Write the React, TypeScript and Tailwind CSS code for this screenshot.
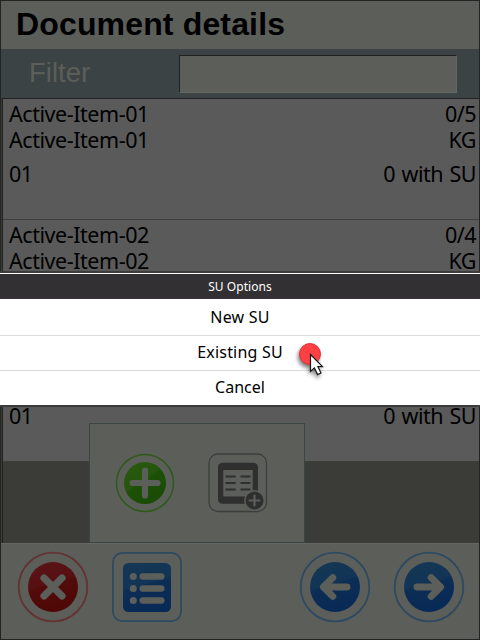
import React from "react";

const uiFont = "font-['Noto_Sans',sans-serif]";
const arial = "font-['Liberation_Sans',Arial,sans-serif]";

const items = [
  { name: "Active-Item-01", qty: "0/5", unit: "KG", code: "01", su: "0 with SU" },
  { name: "Active-Item-02", qty: "0/4", unit: "KG", code: "01", su: "0 with SU" },
  { name: "Active-Item-03", qty: "0/4", unit: "KG", code: "01", su: "0 with SU" },
];

function Line({ left, right }: { left: string; right: string }) {
  return (
    <div className="flex h-[26px] justify-between">
      <span className="tracking-[-0.45px]">{left}</span>
      <span className="tracking-[-0.5px] [word-spacing:1.4px]">{right}</span>
    </div>
  );
}

function Defs() {
  return (
    <defs>
      <linearGradient id="blue" x1="0" y1="0" x2="0.3" y2="1">
        <stop offset="0" stopColor="#153854" />
        <stop offset="0.5" stopColor="#123456" />
        <stop offset="0.56" stopColor="#0c2d54" />
        <stop offset="1" stopColor="#082a56" />
      </linearGradient>
      <linearGradient id="red" x1="0" y1="0" x2="0.3" y2="1">
        <stop offset="0" stopColor="#5a1519" />
        <stop offset="0.5" stopColor="#561012" />
        <stop offset="0.56" stopColor="#520b0a" />
        <stop offset="1" stopColor="#4f0806" />
      </linearGradient>
      <linearGradient id="green" x1="0" y1="0" x2="0.7" y2="1">
        <stop offset="0" stopColor="#2a5a12" />
        <stop offset="0.48" stopColor="#24560b" />
        <stop offset="0.55" stopColor="#1d5007" />
        <stop offset="1" stopColor="#174c04" />
      </linearGradient>
    </defs>
  );
}

function CloseIcon() {
  return (
    <svg width="72" height="72" viewBox="0 0 72 72">
      <Defs />
      <circle cx="36" cy="36" r="34.3" fill="none" stroke="#633231" strokeWidth="1.8" />
      <circle cx="36" cy="36" r="25" fill="url(#red)" />
      <path d="M27 27 45 45M45 27 27 45" stroke="#5c5e5a" strokeWidth="7.2" strokeLinecap="round" />
    </svg>
  );
}

function ListIcon() {
  return (
    <svg width="72" height="72" viewBox="0 0 72 72">
      <rect x="1.9" y="1.9" width="68.2" height="68.2" rx="9.5" fill="none" stroke="#2d4a60" strokeWidth="1.8" />
      <rect x="12" y="12" width="48" height="49" rx="5.5" fill="url(#blue)" />
      {[25.5, 37.5, 49.5].map((y) => (
        <g key={y} fill="#5c5e5a">
          <circle cx="22.300" cy={y} r="3.5" />
          <rect x="28.5" y={y - 3.2} width="25" height="6.4" rx="3.2" />
        </g>
      ))}
    </svg>
  );
}

function ArrowIcon({ flip = false }: { flip?: boolean }) {
  return (
    <svg width="72" height="72" viewBox="0 0 72 72">
      <circle cx="36" cy="36" r="34.3" fill="none" stroke="#2d4a60" strokeWidth="1.8" />
      <circle cx="36" cy="36" r="25" fill="url(#blue)" />
      <g transform={flip ? "translate(72 0) scale(-1 1)" : undefined}>
        <path
          d="M33.8 26.6 24.4 36 33.8 45.4M25.5 36H48"
          fill="none"
          stroke="#5c5e5a"
          strokeWidth="6.9"
          strokeLinecap="round"
          strokeLinejoin="round"
        />
      </g>
    </svg>
  );
}

function AddIcon() {
  return (
    <svg width="60" height="60" viewBox="0 0 60 60">
      <circle cx="30" cy="30" r="28.5" fill="none" stroke="#2d5a18" strokeWidth="1.5" />
      <circle cx="30" cy="30" r="21" fill="url(#green)" />
      <path d="M30 17.5V42.5M17.5 30H42.5" stroke="#5c5e5a" strokeWidth="6.2" strokeLinecap="round" />
    </svg>
  );
}

function AddListIcon() {
  return (
    <svg width="60" height="60" viewBox="0 0 60 60">
      <rect x="1" y="1" width="57.5" height="57.5" rx="9" fill="none" stroke="#3d3e3c" strokeWidth="1.3" />
      <rect x="10" y="9.7" width="40" height="41" rx="4.5" fill="#2e2f2e" />
      <rect x="15.3" y="17" width="29.4" height="26.5" fill="#5c5e5a" />
      {[23.5, 30, 36.5].map((y) => (
        <path key={y} d={`M17.5 ${y}H27.7M32.5 ${y}H42.5`} stroke="#2e2f2e" strokeWidth="1.8" />
      ))}
      <circle cx="46.5" cy="47.5" r="10.5" fill="#5c5e5a" />
      <circle cx="46.5" cy="47.5" r="9" fill="#2e2f2e" />
      <path d="M46.5 42.6V52.4M41.6 47.5H51.4" stroke="#5c5e5a" strokeWidth="2.2" strokeLinecap="round" />
    </svg>
  );
}

function Pointer() {
  return (
    <svg width="40" height="44" viewBox="0 0 40 44" className="absolute top-[66px] left-[294px]">
      <defs>
        <filter id="soft" x="-50%" y="-50%" width="200%" height="200%">
          <feGaussianBlur stdDeviation="2" />
        </filter>
      </defs>
      <g filter="url(#soft)" fill="#000" opacity="0.55">
        <circle cx="14.5" cy="18" r="10.5" />
        <path d="M15 18V36L19 32L22.500 39L26 37.500L23 31H28Z" />
      </g>
      <circle cx="16" cy="15" r="10.5" fill="#fc4044" stroke="#dc3539" strokeWidth="1" />
      <path
        d="M16.500 15.500V32.500L20.400 28.900L23.600 35.600L27 34L23.900 27.700H28.500Z"
        fill="#fff"
        stroke="#161616"
        strokeWidth="1.2"
      />
    </svg>
  );
}

function OptionsDialog() {
  return (
    <div className={`absolute top-[271px] left-0 w-[480px] border-y-2 border-[#3c3d3a] ${uiFont}`}>
      <div className="relative h-[132px] bg-white text-center text-black">
        <div className="h-[26px] border-t border-white bg-[#333033] text-[12px] leading-[25px] tracking-[0.05px] text-white">
          SU Options
        </div>
        <div className="h-[37px] border-b border-[#dcdcdc] text-[16px] leading-[36px] tracking-[0.2px]">New SU</div>
        <div className="h-[35px] border-b border-[#dcdcdc] text-[16px] leading-[33px] tracking-[0.2px]">Existing SU</div>
        <div className="h-[34px] text-[16px] leading-[33px]">Cancel</div>
        <Pointer />
      </div>
    </div>
  );
}

export default function App() {
  return (
    <div className="relative h-[640px] w-[480px] overflow-hidden">
      <div className="flex h-full flex-col border border-[#242523] bg-[#5c5e5a] text-black">
        <h1 className={`h-[48px] shrink-0 pl-[15px] text-[32px] leading-[46px] font-bold tracking-[0.15px] ${arial}`}>
          Document details
        </h1>
        <div className="flex h-[49px] shrink-0 items-start bg-[#3b4344]">
          <label className={`w-[178px] pl-[28px] text-[27.5px] leading-[47px] text-[#5c5e5a] ${arial}`}>Filter</label>
          <div className="mt-[6px] h-[38px] w-[278px] border border-t-[#20211f] border-r-[#656763] border-b-[#656763] border-l-[#20211f] bg-[#5c5e5a]" />
        </div>
        <div className="h-[445px] shrink-0 bg-[#3b3c38] pl-px">
          <main className="h-full border-t border-l border-[#222321]">
            {items.map((item) => (
              <div
                key={item.name}
                className={`h-[121px] border-b border-[#3e3f3d] bg-[#5a5a5a] pt-[2px] pr-[3px] pl-[6px] text-[21.5px] leading-[26px] ${uiFont}`}
              >
                <Line left={item.name} right={item.qty} />
                <Line left={item.name} right={item.unit} />
                <div className="pt-[8px]">
                  <Line left={item.code} right={item.su} />
                </div>
              </div>
            ))}
          </main>
        </div>
        <footer className="flex flex-1 items-start border-t border-[#656763] pt-[7px] pl-[16px]">
          <CloseIcon />
          <div className="ml-[22px]">
            <ListIcon />
          </div>
          <div className="ml-[116px]">
            <ArrowIcon />
          </div>
          <div className="ml-[22px]">
            <ArrowIcon flip />
          </div>
        </footer>
      </div>
      <div className="absolute top-[423px] left-[89px] flex h-[120px] w-[216px] gap-[33px] border border-[#3b4546] bg-[#5c5e5a] pt-[29px] pl-[25px]">
        <AddIcon />
        <AddListIcon />
      </div>
      <OptionsDialog />
    </div>
  );
}
